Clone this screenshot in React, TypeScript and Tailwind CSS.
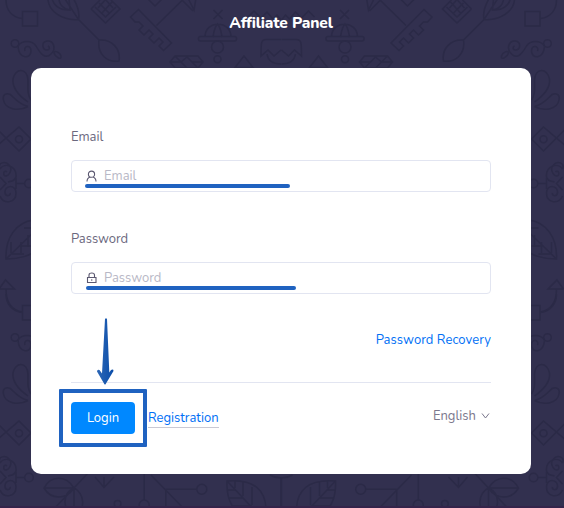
import React from "react";

function Ornaments() {
  return (
    <>
      {/* square on a vine */}
      <path d="M22.5 11.5h15v14.5h-15zM6 0C6 10 12 17.500 22 18.500" />
      {/* big leaf and bud */}
      <path d="M48 0C49 11 62 21 78.500 19.500C80 13 77 4 73 -2M63 -4L78.500 19.500L99 40M52 -2C53 5 59 10 69 10M59 0C60 5 64 9 70 10L69 -1M99 40C112 39 121 49 119 61C107 63 97 54 99 40z" />
      {/* woven diamond */}
      <path d="M91 9L105.500 23L120 9L111 0M91 9L100 0M95 7L105.500 17L116 7M99 3L109 13M105 -1L113 8M112 2L102 13M106 -1L98 8" />
      {/* comb */}
      <path d="M130.500 17L138.500 9.500L171.500 43L163.500 50.500L159 46L163 42L159 38L154 43L149 38L153 34L149 30L144 35L139 30L143 26L139 22L135 22zM156.500 25.500L182.500 0M147 -2L155 6L163 -2M181 -1L193 11" />
      {/* scroll */}
      <circle cx="15" cy="43.500" r="3.800" />
      <path d="M18 46C22 40 32 40 36 46C40 53 45 60 51 54C57 48 53 40 47 41C41 42 42 50 47 50C50 50 50 47 48 46M18 46C19 60 31 59 31 51C31 44 23 46 25 51M54 53C55 57 62 61 61 56C60 52 54 50 54 53z" />
      {/* petals */}
      <path d="M28 102C18 95 12 88 13 79C15 68 27 67 28 80C28 89 27 94 31 100M28 106.500C18 112 5 109 3.500 100C2 93 9 92 13 97C18 102 22 105 28 106.500" />
      {/* eye diamond */}
      <path d="M-2 145L19 127L31 139L19 151L7 139L-2 130" />
      <circle cx="19" cy="139.300" r="3.500" />
      {/* double curl */}
      <path d="M0 169C-3 162 6 161 9 165C14 170 7 179 4 175C3 172 5 170 7 172M0 169C5 162 17 166 16 177C15 181 12 181 8 182M0 196C4 205 16 203 16 193C16 184 4 185 5 193C6 197 11 196 10 193M0 177L6 183.500L0 190M16 178V189M16 183.500H25" />
      <circle cx="29" cy="183.500" r="4.300" />
      {/* veined leaf */}
      <path d="M34 220C16 222 5 238 6 259C20 259 32 255 36 250M6 259L36 230M11 242V253M21 242V253M28 235V247M12 254H24M20 246H31M24 228H34" />
      {/* arrowed vine */}
      <path d="M-1 289L5.500 280L14.500 289H-1M6 289C6 302 12 310 22 312" />
      {/* cube */}
      <path d="M170 62L175 56H198L203 62L198 68H175zM175 56L181 62H170M181 62L187 57M181 62L187 68M203 62H192L187 57M192 62L198 68" />
      {/* hat and bells */}
      <path d="M213.500 10L222.500 19M222.500 10L213.500 19M205 37C205 20 231 20 231 37M213 37C214 32 214 28 217.500 24C221 28 221 32 222 37" />
      <rect x="198.500" y="36.500" width="38" height="4.500" rx="2" />
      <circle cx="217.500" cy="47" r="6" />
      <circle cx="217.500" cy="59.300" r="3.500" />
      <path d="M235 67.500L244 56L253 67.500zM187 -4L194 10L196 -2" />
      {/* half of the mask */}
      <path d="M281 39.500H266C261 39.500 261 43 261 56L268 50L274 56L281 50M267 54C268 61 274 64 281 64M281 20L277 15L273 19L267 12L261 18L254 11L248 17" />
      {/* foliage */}
      <path d="M44 194C51 181 66 181 74 194C66 206 51 206 44 194zM44 194H74L88 179M74 194L47 222M74 194V220M74 194C61 200 63 218 74 220C87 217 84 198 74 194M95 183L104 193.500L114 183M104 183V193" />
      <circle cx="117.600" cy="209.700" r="3.300" />
      <circle cx="144.200" cy="211" r="5" />
      <circle cx="201.800" cy="195.300" r="5" />
      <path d="M117.600 213V220M144.200 206V180M151 181L188 219M165.800 195.300H197M165.800 195.300V220" />
      <path d="M266 219C267 195 253 185 227 187C226 207 234 220 249 224M227 187L261 223M235 194V187M243 202V188M252 211V193M235 196H227M243 204H228M252 212H232" />
      <path d="M281 183V220M270 181C275 184 278 184 281 184" />
    </>
  );
}

function HalfPattern() {
  return (
    <>
      <g>
        <Ornaments />
      </g>
      <g transform="translate(0 294)">
        <Ornaments />
      </g>
    </>
  );
}

function Backdrop() {
  return (
    <svg
      className="absolute inset-0"
      width="564"
      height="508"
      viewBox="0 0 564 508"
      fill="none"
      stroke="#2b2a47"
      strokeWidth="1.5"
    >
      <HalfPattern />
      <g transform="translate(562.5 0) scale(-1 1)">
        <HalfPattern />
      </g>
    </svg>
  );
}

function UserIcon() {
  return (
    <svg width="12" height="12" viewBox="0 0 12 12" fill="none" stroke="#5b5870" strokeWidth="1.1">
      <circle cx="5.500" cy="4.200" r="3.100" />
      <path d="M1 11.500C1 9 2.400 7.500 4.200 7M10 11.500C10 9 8.600 7.500 6.800 7" />
    </svg>
  );
}

function LockIcon() {
  return (
    <svg width="12" height="12" viewBox="0 0 12 12" fill="none" stroke="#5b5870" strokeWidth="1.1">
      <path d="M1.500 5.500h8.500v5h-8.500zM3 5.500V3C3 .3 8.500 .3 8.500 3V5.500" />
      <path d="M5.750 7.300v1.500" />
    </svg>
  );
}

type FieldProps = {
  label: string;
  icon: React.ReactNode;
  mark: string;
};

function Field({ label, icon, mark }: FieldProps) {
  return (
    <div className="h-[102px]">
      <div className="h-5 text-[13px] leading-5 tracking-[-0.05px] text-[#6b687e]">{label}</div>
      <div className="relative mt-[13px] flex h-8 items-center rounded-[4px] border border-[#e2e5f1] pl-[14px]">
        {icon}
        <span className="ml-[6px] text-[13px] leading-5 text-[#b8b8c6]">{label}</span>
        <span className={`absolute h-1 rounded-full bg-[#1f62c0] ${mark}`} />
      </div>
    </div>
  );
}

export default function App() {
  return (
    <div className="relative h-[508px] w-[564px] overflow-hidden bg-[#32304f] font-['Nunito','Lato',sans-serif]">
      <Backdrop />
      <div className="absolute inset-x-0 bottom-0 h-[2px] bg-[#34244a]" />

      <main className="relative">
        <h1 className="h-[68px] pt-[11px] pr-[2px] text-center text-[15.5px] leading-6 font-extrabold tracking-[-0.14px] text-white">
          Affiliate Panel
        </h1>

        <section className="relative ml-[31px] h-[406px] w-[500px] rounded-[10px] bg-white px-10 pt-[59px]">
          <Field label="Email" icon={<UserIcon />} mark="left-[13px] top-[23px] w-[205px]" />
          <Field label="Password" icon={<LockIcon />} mark="left-[14px] top-[23px] w-[210px]" />

          <div className="flex h-[52px] justify-end border-b border-[#e2e5f1]">
            <a className="-mt-[1px] text-[13px] leading-5 tracking-[0.05px] text-[#006ff5]">Password Recovery</a>
          </div>

          <div className="flex items-start pt-[19px]">
            <button className="h-8 w-16 rounded-[4px] bg-[#0088ff] text-[13px] leading-5 text-white">
              Login
            </button>
            <a className="ml-[13px] mt-[6px] h-5 border-b border-[#c9c9d4] text-[13px] leading-5 text-[#006ff5]">
              Registration
            </a>
            <div className="ml-auto mt-1 flex items-center gap-[5px] pr-[1px] text-[13px] leading-5 text-[#7b788d]">
              English
              <svg width="9" height="8" viewBox="0 0 9 8" fill="none" stroke="#7b788d">
                <path d="M1 1.500L4.500 6L8 1.500" />
              </svg>
            </div>
          </div>

          {/* highlight around the login button */}
          <div className="absolute left-[28px] top-[321px] h-[58px] w-[88px] rounded-[1px] border-4 border-[#1f62c0]" />
          <svg className="absolute left-[62px] top-[248px]" width="24" height="70" viewBox="0 0 24 70">
            <defs>
              <linearGradient id="shaft" x1="0" x2="1">
                <stop offset="0" stopColor="#2c67b6" />
                <stop offset="1" stopColor="#0a4da9" />
              </linearGradient>
            </defs>
            <path
              d="M12 3Q13 1.500 14 3L16.300 56.500L18 54Q20.500 52.800 20.500 55L12.700 68Q12 69 11.300 68L4 55.500Q4.200 52.800 6.500 54L9 57.500Z"
              fill="url(#shaft)"
            />
          </svg>
        </section>
      </main>
    </div>
  );
}
